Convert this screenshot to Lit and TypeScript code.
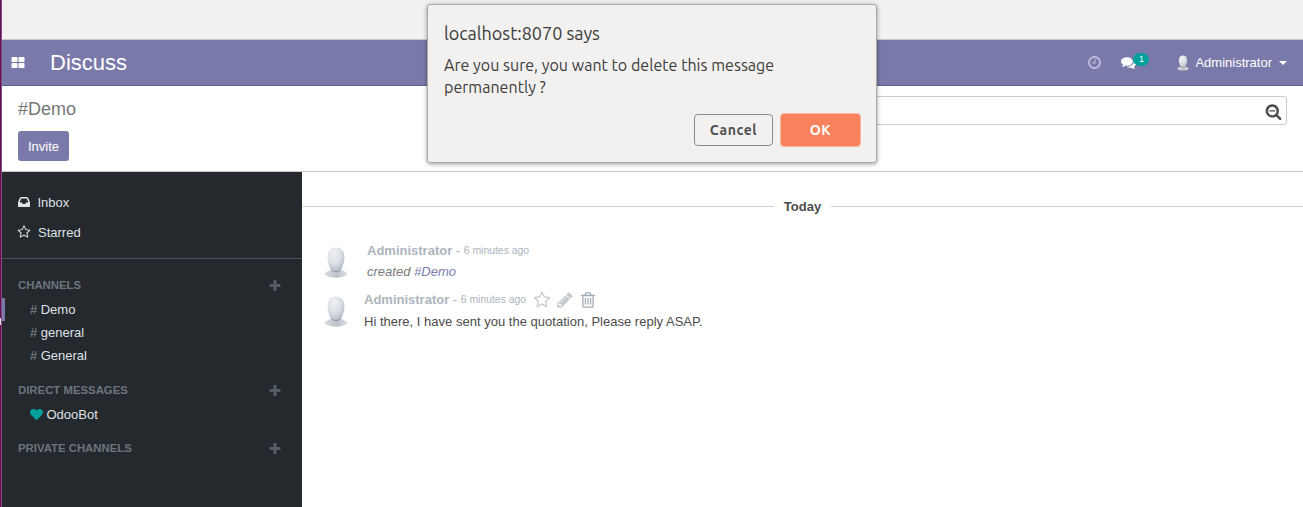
import { LitElement, html, css, svg } from "lit";
import { customElement, property } from "lit/decorators.js";

const ICONS: Record<string, string> = {
  apps: "M832 1024v384q0 52-38 90t-90 38h-512q-52 0-90-38t-38-90v-384q0-52 38-90t90-38h512q52 0 90 38t38 90zm0-768v384q0 52-38 90t-90 38h-512q-52 0-90-38t-38-90v-384q0-52 38-90t90-38h512q52 0 90 38t38 90zm896 768v384q0 52-38 90t-90 38h-512q-52 0-90-38t-38-90v-384q0-52 38-90t90-38h512q52 0 90 38t38 90zm0-768v384q0 52-38 90t-90 38h-512q-52 0-90-38t-38-90v-384q0-52 38-90t90-38h512q52 0 90 38t38 90z",
  clock: "M1024 544v448q0 14-9 23t-23 9h-320q-14 0-23-9t-9-23v-64q0-14 9-23t23-9h224v-352q0-14 9-23t23-9h64q14 0 23 9t9 23zm416 352q0-148-73-273t-198-198-273-73-273 73-198 198-73 273 73 273 198 198 273 73 273-73 198-198 73-273zm224 0q0 209-103 385.5t-279.5 279.5-385.5 103-385.5-103-279.5-279.5-103-385.5 103-385.5 279.5-279.5 385.5-103 385.5 103 279.5 279.5 103 385.5z",
  comments: "M1408 768q0 139-94 257t-256.5 186.5-353.5 68.5q-86 0-176-16-124 88-278 128-36 9-86 16h-3q-11 0-20.5-8t-11.5-21q-1-3-1-6.5t.5-6.5 2-6l2.5-5 3.5-5.5 4-5 4.5-5 4-4.5q5-6 23-25t26-29.5 22.5-29 25-38.5 20.5-44q-124-72-195-177t-71-224q0-139 94-257t256.5-186.5 353.5-68.5 353.5 68.5 256.5 186.5 94 257zm384 256q0 120-71 224.5t-195 176.5q10 24 20.5 44t25 38.5 22.5 29 26 29.5 23 25q1 1 4 4.5t4.5 5 4 5 3.5 5.5l2.5 5 2 6 .5 6.5-1 6.5q-3 14-13 22t-22 7q-50-7-86-16-154-40-278-128-90 16-176 16-271 0-472-132 58 4 88 4 161 0 309-45t264-129q125-92 192-212t67-254q0-77-23-152 129 71 204 178t75 230z",
  searchMinus: "M1088 800v64q0 13-9.5 22.5t-22.5 9.5h-576q-13 0-22.5-9.5t-9.5-22.5v-64q0-13 9.5-22.5t22.5-9.5h576q13 0 22.5 9.5t9.5 22.5zm128 32q0-185-131.5-316.5t-316.5-131.5-316.5 131.5-131.5 316.5 131.5 316.5 316.5 131.5 316.5-131.5 131.5-316.5zm512 832q0 53-37.5 90.5t-90.5 37.5q-54 0-90-38l-343-342q-179 124-399 124-143 0-273.5-55.5t-225-150-150-225-55.5-273.5 55.5-273.5 150-225 225-150 273.5-55.5 273.5 55.5 225 150 150 225 55.5 273.5q0 220-124 399l343 343q37 37 37 90z",
  inbox: "M1151 960h316q-1-3-2.5-8t-2.5-8l-212-496h-708l-212 496q-1 2-2.5 8t-2.5 8h316l95 192h320zm513 30v482q0 26-19 45t-45 19h-1408q-26 0-45-19t-19-45v-482q0-62 25-123l238-552q10-25 36.5-42t52.5-17h832q26 0 52.5 17t36.5 42l238 552q25 61 25 123z",
  star: "M1201 1004l306-297-422-62-189-382-189 382-422 62 306 297-73 421 378-199 377 199zm527-357q0 22-26 48l-363 354 86 500q1 7 1 20 0 50-41 50-19 0-40-12l-449-236-449 236q-22 12-40 12-21 0-31.5-14.5t-10.5-35.5q0-6 2-20l86-500-364-354q-25-27-25-48 0-37 56-46l502-73 225-455q19-41 49-41t49 41l225 455 502 73q56 9 56 46z",
  plus: "M1600 736v192q0 40-28 68t-68 28h-416v416q0 40-28 68t-68 28h-192q-40 0-68-28t-28-68v-416h-416q-40 0-68-28t-28-68v-192q0-40 28-68t68-28h416v-416q0-40 28-68t68-28h192q40 0 68 28t28 68v416h416q40 0 68 28t28 68z",
  heart: "M896 1664q-26 0-44-18l-624-602q-10-8-27.5-26t-55.5-65.5-68-97.5-53.5-121-23.5-138q0-220 127-344t351-124q62 0 126.5 21.5t120 58 95.5 68.5 76 68q36-36 76-68t95.5-68.5 120-58 126.5-21.5q224 0 351 124t127 344q0 221-229 450l-623 600q-18 18-44 18z",
  pencil: "M491 1536l91-91-235-235-91 91v107h128v128h107zm523-928q0-22-22-22-10 0-17 7l-542 542q-7 7-7 17 0 22 22 22 10 0 17-7l542-542q7-7 7-17zm-54-192l416 416-832 832h-416v-416zm683 96q0 53-37 90l-166 166-416-416 166-165q36-38 90-38 53 0 91 38l235 234q37 39 37 91z",
  trash: "M704 736v576q0 14-9 23t-23 9h-64q-14 0-23-9t-9-23v-576q0-14 9-23t23-9h64q14 0 23 9t9 23zm256 0v576q0 14-9 23t-23 9h-64q-14 0-23-9t-9-23v-576q0-14 9-23t23-9h64q14 0 23 9t9 23zm256 0v576q0 14-9 23t-23 9h-64q-14 0-23-9t-9-23v-576q0-14 9-23t23-9h64q14 0 23 9t9 23zm128 724v-948h-896v948q0 22 7 40.5t14.5 27 10.5 8.5h832q3 0 10.5-8.5t14.5-27 7-40.5zm-672-1076h448l-48-117q-7-9-17-11h-317q-10 2-17 11zm928 32v64q0 14-9 23t-23 9h-96v948q0 83-47 143.5t-113 60.5h-832q-66 0-113-58.5t-47-141.5v-952h-96q-14 0-23-9t-9-23v-64q0-14 9-23t23-9h309l70-167q15-37 54-63t79-26h320q40 0 79 26t54 63l70 167h309q14 0 23 9t9 23z",
};

@customElement("fa-icon")
class FaIcon extends LitElement {
  static styles = css`
    :host { display: block; flex: none; width: 14px; height: 14px; }
    .glyph { display: block; width: 100%; height: 100%; fill: currentColor; overflow: visible; }
  `;
  @property() name = "";
  render() {
    return html`<svg class="glyph" viewBox="0 0 1792 1792">${svg`<path d=${ICONS[this.name]}></path>`}</svg>`;
  }
}

@customElement("user-avatar")
class UserAvatar extends LitElement {
  static styles = css`
    :host { display: block; flex: none; width: 24px; height: 31px; }
    .figure { display: block; width: 100%; height: 100%; }
  `;
  render() {
    return html`<svg class="figure" viewBox="0 0 24 31">
      <defs>
        <radialGradient id="head" cx="0.38" cy="0.25" r="0.85">
          <stop offset="0" stop-color="#f0f1f3"></stop>
          <stop offset="0.5" stop-color="#dcdfe4"></stop>
          <stop offset="1" stop-color="#a9b2be"></stop>
        </radialGradient>
        <linearGradient id="base" x1="0" x2="1" y1="0" y2="0">
          <stop offset="0" stop-color="#dcdfe3"></stop>
          <stop offset="0.55" stop-color="#bcc2ca"></stop>
          <stop offset="1" stop-color="#e0e3e7"></stop>
        </linearGradient>
      </defs>
      <path d="M5 23.5Q12 21 19 23.5L23.4 26Q24.4 27.6 19 29.8Q12 31.6 5 29.8Q-.4 27.6 .6 26.2Z" fill="url(#base)"></path>
      <path d="M5.6 20Q8 25.2 12 25.2T18.4 20Z" fill="#8795a6"></path>
      <path d="M12 .5C17.6 .5 20.4 4.4 20.4 10.4C20.4 17.6 17 24.3 12 24.3S3.6 17.6 3.6 10.4C3.6 4.4 6.4 .5 12 .5Z" fill="url(#head)"></path>
    </svg>`;
  }
}

@customElement("discuss-sidebar")
class DiscussSidebar extends LitElement {
  static styles = css`
    :host { display: block; flex: none; width: 300px; box-sizing: border-box; background: #25282d; color: #dee2e6; padding-top: 15px; font-size: 13px; }
    .box { display: flex; align-items: center; height: 30px; padding-left: 15px; gap: 6.4px; }
    .box.starred { gap: 7px; }
    .rule { height: 1px; background: #4a4f55; margin: 11px 0 16px; }
    .title { display: flex; align-items: center; justify-content: space-between; height: 20px; padding: 0 20px 0 16px; margin-bottom: 3px; font-size: 11.375px; font-weight: bold; color: #6c757d; }
    .title fa-icon { color: #555c63; margin-top: 1px; }
    .list { margin-bottom: 13px; }
    .list.short { margin-bottom: 12px; }
    .item { display: flex; align-items: center; height: 23px; padding-left: 25px; gap: 3.5px; border-left: 3px solid transparent; white-space: pre; }
    .item.active { border-color: #7a7aaa; }
    .hash { color: #868e96; }
    .bot { width: 13px; height: 13px; color: #00a09d; }
  `;
  render() {
    const plus = html`<fa-icon name="plus"></fa-icon>`;
    const channels = ["Demo", "general", "General"];
    return html`
      <div class="box"><fa-icon name="inbox"></fa-icon><span>Inbox</span></div>
      <div class="box starred"><fa-icon name="star"></fa-icon><span>Starred</span></div>
      <div class="rule"></div>
      <div class="title"><span>CHANNELS</span>${plus}</div>
      <div class="list">
        ${channels.map((c, i) => html`<div class="item ${i === 0 ? "active" : ""}"><span class="hash">#</span><span>${c}</span></div>`)}
      </div>
      <div class="title"><span>DIRECT MESSAGES</span>${plus}</div>
      <div class="list short">
        <div class="item"><fa-icon class="bot" name="heart"></fa-icon><span>OdooBot</span></div>
      </div>
      <div class="title"><span>PRIVATE CHANNELS</span>${plus}</div>
    `;
  }
}

@customElement("discuss-thread")
class DiscussThread extends LitElement {
  static styles = css`
    :host { display: block; flex: 1; background: #fff; padding-top: 24px; font-size: 13px; color: #4c4c4c; }
    .day { display: flex; align-items: center; gap: 10px; height: 21px; font-weight: bold; }
    .day::before, .day::after { content: ""; flex: 1; height: 1px; background: #ced4da; }
    .message { display: flex; padding-left: 22px; }
    .message.first { margin-top: 23px; height: 49px; }
    .avatar { margin-top: 7px; }
    .body { margin-left: 16px; }
    .first .body { margin-left: 19px; }
    .head { display: flex; align-items: center; height: 20px; color: #adb5bd; white-space: pre; }
    .author { font-weight: bold; }
    .time { font-size: 10.4px; padding-top: 1px; }
    .text { height: 20px; line-height: 25px; letter-spacing: 0.012px; }
    .note { line-height: 23px; font-style: italic; color: #7a7a7a; }
    .link { color: #7c7bad; }
    .tools { display: flex; align-items: center; gap: 5px; margin: 1px 0 0 7px; }
    .tool { width: 18px; height: 18px; color: #c4cad0; }
    .tool.strong { color: #a3abb3; }
  `;
  render() {
    return html`
      <div class="day"><span>Today</span></div>
      <div class="message first">
        <user-avatar class="avatar"></user-avatar>
        <div class="body">
          <div class="head"><span class="author">Administrator</span><span> - </span><span class="time">6 minutes ago</span></div>
          <div class="text note">created <span class="link">#Demo</span></div>
        </div>
      </div>
      <div class="message">
        <user-avatar class="avatar"></user-avatar>
        <div class="body">
          <div class="head"><span class="author">Administrator</span><span> - </span><span class="time">6 minutes ago</span>
            <div class="tools"><fa-icon class="tool" name="star"></fa-icon><fa-icon class="tool" name="pencil"></fa-icon><fa-icon class="tool strong" name="trash"></fa-icon></div></div>
          <div class="text">Hi there, I have sent you the quotation, Please reply ASAP.</div>
        </div>
      </div>
    `;
  }
}

@customElement("confirm-dialog")
class ConfirmDialog extends LitElement {
  static styles = css`
    :host { display: flex; flex-direction: column; box-sizing: border-box; width: 450px; height: 159px; padding: 17px 15px 15px 16px; background: #f2f1f0; border: 1px solid #a9a9a8; border-radius: 3px; box-shadow: 0 1px 4px rgba(0, 0, 0, 0.4); font-family: Ubuntu, "Open Sans", "Noto Sans", sans-serif; color: #3c3c3c; }
    .title { font-size: 18px; line-height: 22px; white-space: nowrap; }
    .copy { margin-top: 10px; font-size: 16px; line-height: 22px; white-space: pre; letter-spacing: 0.03px; }
    .buttons { display: flex; align-items: center; justify-content: flex-end; gap: 7px; margin-top: auto; }
    .button { box-sizing: border-box; display: flex; align-items: center; justify-content: center; font-size: 14px; letter-spacing: 0.6px; font-weight: 600; border-radius: 4px; }
    .cancel { width: 79px; height: 32px; border: 1px solid #8c8c8b; color: #505050; }
    .ok { width: 81px; height: 34px; border: 1px solid #f6b7a2; background: #f9825c; color: #fff; }
  `;
  render() {
    return html`
      <div class="title">localhost:8070 says</div>
      <div class="copy">Are you sure, you want to delete this message
permanently ?</div>
      <div class="buttons"><div class="button cancel">Cancel</div><div class="button ok">OK</div></div>
    `;
  }
}

@customElement("app-root")
class AppRoot extends LitElement {
  static styles = css`
    :host { position: relative; display: flex; width: 1303px; height: 507px; overflow: hidden; font-family: "Liberation Sans", Arial, sans-serif; font-size: 13px; }
    .edge { flex: none; width: 1px; background: #5e1150; border-right: 1px solid #8d4a80; }
    .window { flex: 1; display: flex; flex-direction: column; }
    .chrome { box-sizing: border-box; height: 40px; background: #f2f1f0; border-bottom: 1px solid #cbc9c7; }
    .strip { height: 2px; width: 1050px; margin-left: 116px; background: #edf1f3; }
    .nav { box-sizing: border-box; height: 46px; display: flex; align-items: center; background: #7a7aaa; border-bottom: 1px solid #5f5e97; color: #fff; padding: 0 16px 0 9px; }
    .apps { color: #fff; }
    .brand { margin-left: 25px; font-size: 22px; flex: 1; }
    .clock { width: 15px; height: 15px; color: #bdbdd9; margin-top: -1px; }
    .chat { width: 15px; height: 15px; margin: -1px 0 0 19px; }
    .badge { margin: -6px 0 0 -3px; width: 16px; height: 13px; border-radius: 7px; background: #00a09d; font-size: 9px; line-height: 13px; text-align: center; }
    .face { width: 12px; height: 16px; margin-left: 28px; }
    .user { margin-left: 6px; }
    .caret { margin-left: 7px; border: 4px solid transparent; border-top-color: #fff; border-bottom: 0; }
    .panel { box-sizing: border-box; height: 86px; display: flex; justify-content: space-between; background: #fff; border-bottom: 1px solid #c8c8c8; padding: 10px 16px 0; }
    .crumb { font-size: 18px; line-height: 26px; color: #777; }
    .invite { margin-top: 9px; width: 51px; height: 30px; line-height: 31px; text-align: center; border-radius: 3px; background: #7a7aaa; color: #fff; }
    .search { box-sizing: border-box; width: 620px; height: 29px; display: flex; align-items: center; justify-content: flex-end; border: 1px solid #ccc; border-radius: 3px; padding: 1px 4px 0 0; }
    .lens { width: 17px; height: 17px; color: #4c4c4c; }
    .main { flex: 1; display: flex; }
    .dialog { position: absolute; left: 427px; top: 4px; }
    .pointer { position: absolute; left: 0; top: 318px; width: 1px; height: 7px; background: #ddd; }
  `;
  render() {
    return html`
      <div class="edge"></div>
      <div class="window">
        <div class="chrome"><div class="strip"></div></div>
        <div class="nav">
          <fa-icon class="apps" name="apps"></fa-icon>
          <div class="brand">Discuss</div>
          <fa-icon class="clock" name="clock"></fa-icon>
          <fa-icon class="chat" name="comments"></fa-icon>
          <div class="badge">1</div>
          <user-avatar class="face"></user-avatar>
          <div class="user">Administrator</div>
          <div class="caret"></div>
        </div>
        <div class="panel">
          <div>
            <div class="crumb">#Demo</div>
            <div class="invite">Invite</div>
          </div>
          <div class="search"><fa-icon class="lens" name="searchMinus"></fa-icon></div>
        </div>
        <div class="main">
          <discuss-sidebar></discuss-sidebar>
          <discuss-thread></discuss-thread>
        </div>
      </div>
      <confirm-dialog class="dialog"></confirm-dialog>
      <div class="pointer"></div>
    `;
  }
}
